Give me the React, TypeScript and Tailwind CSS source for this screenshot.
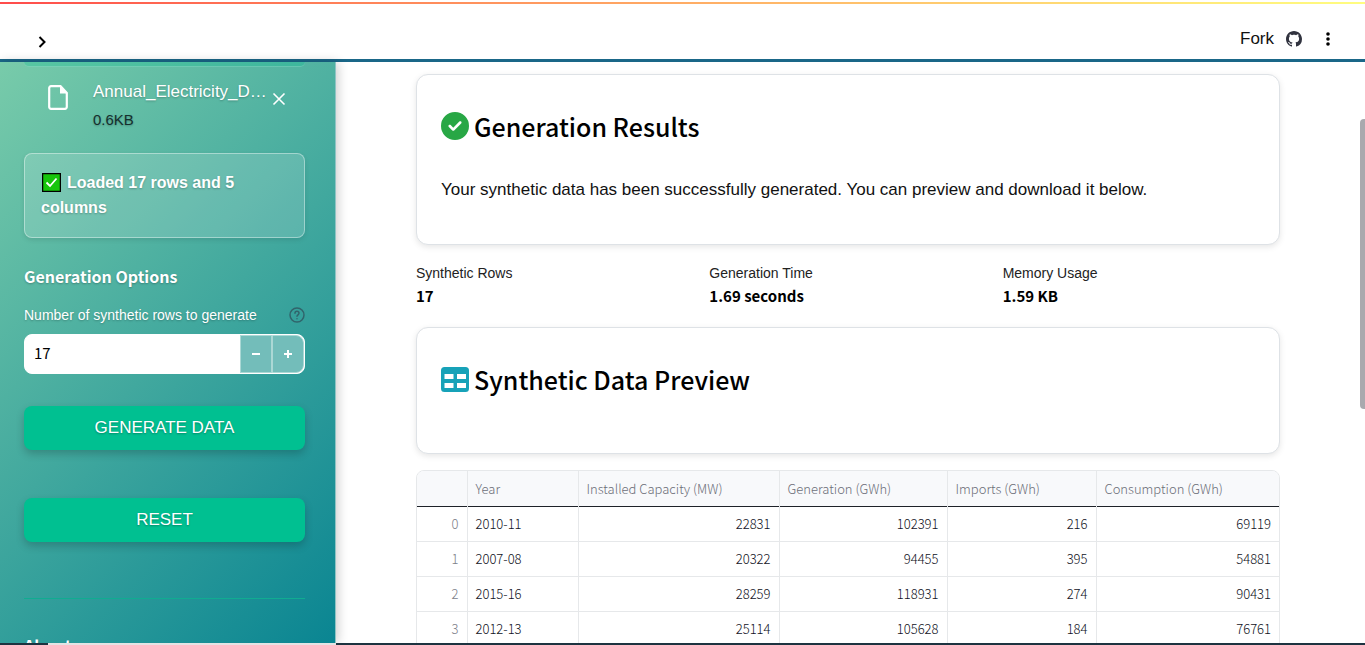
import React from "react";
import { FaCircleCheck } from "react-icons/fa6";

const rows = [
  ["2010-11", "22831", "102391", "216", "69119"],
  ["2007-08", "20322", "94455", "395", "54881"],
  ["2015-16", "28259", "118931", "274", "90431"],
  ["2012-13", "25114", "105628", "184", "76761"],
];

const columns = ["Year", "Installed Capacity (MW)", "Generation (GWh)", "Imports (GWh)", "Consumption (GWh)"];

const metrics = [
  ["Synthetic Rows", "17"],
  ["Generation Time", "1.69 seconds"],
  ["Memory Usage", "1.59 KB"],
];

function GithubMark() {
  return (
    <svg width="16" height="16" viewBox="0 0 16 16" fill="currentColor">
      <path d="M8 0C3.58 0 0 3.58 0 8c0 3.54 2.29 6.53 5.47 7.59.4.07.55-.17.55-.38 0-.19-.01-.82-.01-1.49-2.01.37-2.53-.49-2.69-.94-.09-.23-.48-.94-.82-1.13-.28-.15-.68-.52-.01-.53.63-.01 1.08.58 1.23.82.72 1.21 1.87.87 2.33.66.07-.52.28-.87.51-1.07-1.78-.2-3.64-.89-3.64-3.95 0-.87.31-1.59.82-2.15-.08-.2-.36-1.02.08-2.12 0 0 .67-.21 2.2.82.64-.18 1.32-.27 2-.27.68 0 1.36.09 2 .27 1.53-1.04 2.2-.82 2.2-.82.44 1.1.16 1.92.08 2.12.51.56.82 1.27.82 2.15 0 3.07-1.87 3.75-3.65 3.95.29.25.54.73.54 1.48 0 1.07-.01 1.93-.01 2.2 0 .21.15.46.55.38A8.013 8.013 0 0016 8c0-4.42-3.58-8-8-8z" />
    </svg>
  );
}

function Header() {
  return (
    <header className="shrink-0 border-b-[3px] border-[#1a6788] bg-white">
      <div className="mt-[2px] h-[2px] bg-gradient-to-r from-[#ff4b4b] to-[#fffd80]" />
      <div className="flex h-[55px] items-center justify-between pr-[29px] pl-8">
        <button aria-label="Open sidebar" className="mt-5 flex size-5 items-center justify-center text-black">
          <svg width="10" height="14" viewBox="0 0 10 14" fill="none" stroke="currentColor" strokeWidth="2">
            <path d="M2.500 2l5 5-5 5" />
          </svg>
        </button>
        <div className="mt-[14px] flex items-center">
          <a href="#fork" className="text-[17px] text-[#111]">Fork</a>
          <a href="#github" aria-label="GitHub" className="mt-px ml-3 text-[#31333f]">
            <GithubMark />
          </a>
          <button aria-label="Menu" className="ml-[18px] flex w-4 justify-center text-black">
            <svg width="4" height="14" viewBox="0 0 4 14" fill="currentColor">
              <circle cx="2" cy="2" r="1.800" />
              <circle cx="2" cy="7" r="1.800" />
              <circle cx="2" cy="12" r="1.800" />
            </svg>
          </button>
        </div>
      </div>
    </header>
  );
}

function ActionButton({ children }: { children: React.ReactNode }) {
  return (
    <button className="flex h-11 w-full items-center justify-center rounded-lg bg-[#00c091] text-[17px] text-white shadow-[0_4px_8px_rgba(0,0,0,0.2)] [text-shadow:0_1px_2px_rgba(0,0,0,0.3)]">
      {children}
    </button>
  );
}

function Sidebar() {
  return (
    <aside className="w-[336px] shrink-0 overflow-hidden border-r border-[#8fc4c4] bg-[linear-gradient(135deg,#78cbaa_0%,#0a8592_100%)] pr-[30px] pl-6 text-white shadow-[2px_0_10px_rgba(0,0,0,0.2)] [text-shadow:0_1px_2px_rgba(0,0,0,0.25)]">
      <div className="h-[5px] rounded-b-lg border-b border-white/20 bg-[#00c091]/25" />
      <div className="mt-[14px] flex h-[56px] pl-6">
        <svg className="mt-1 shrink-0" width="20" height="25" viewBox="0 0 20 25" fill="none">
          <path d="M3 1.2h9.5L18.8 8v14a1.8 1.8 0 0 1-1.8 1.8H3A1.8 1.8 0 0 1 1.2 22V3A1.8 1.8 0 0 1 3 1.2z" stroke="#fff" strokeWidth="2.2" />
          <path d="M12 1v7.500h7.500z" fill="#fff" />
        </svg>
        <div className="ml-[25px] w-[172px]">
          <div className="text-[17px] leading-[22px] whitespace-nowrap">Annual_Electricity_D…</div>
          <div className="mt-[7px] text-[15px] leading-5 text-[#15302e]">0.6KB</div>
        </div>
        <button aria-label="Remove file" className="ml-[7px] mt-[11px] flex size-[14px]">
          <svg width="14" height="14" viewBox="0 0 14 14" stroke="#fff" strokeWidth="1.600">
            <path d="M1.500 1.500l11 11M12.500 1.500l-11 11" />
          </svg>
        </button>
      </div>
      <div className="mt-4 rounded-lg border border-white/40 bg-white/15 px-4 pt-4 pb-[17px] text-base leading-[25px] font-bold shadow-[0_2px_5px_rgba(0,0,0,0.1)]">
        <svg className="mr-[6px] ml-px inline-block align-[-4px]" width="19" height="19" viewBox="0 0 19 19">
          <rect x="0.500" y="0.500" width="18" height="18" fill="#16c60c" stroke="#000" strokeWidth="1.500" />
          <path d="M4.500 9.500l3.500 3.500 6.500-7.500" fill="none" stroke="#fff" strokeWidth="1.800" />
        </svg>
        Loaded 17 rows and 5 columns
      </div>
      <h3 className="mt-[26px] font-['Noto_Sans_CJK_SC',sans-serif] text-base leading-6 font-bold">Generation Options</h3>
      <div className="mt-[18px] flex items-center justify-between">
        <label htmlFor="rows" className="text-sm leading-[18px]">Number of synthetic rows to generate</label>
        <svg width="16" height="16" viewBox="0 0 24 24" fill="none" stroke="#31646b" strokeWidth="2.200" strokeLinecap="round">
          <circle cx="12" cy="12" r="10.500" />
          <path d="M9 9.500a3 3 0 0 1 6 0c0 2-3 2.500-3 4.500M12 17.500v.1" />
        </svg>
      </div>
      <div className="mt-[10px] flex h-10 overflow-hidden rounded-lg border border-white bg-white">
        <input id="rows" defaultValue="17" className="min-w-0 flex-1 px-[9px] pb-[2px] font-['Noto_Sans_CJK_SC',sans-serif] text-[15px] text-black outline-none" />
        <button aria-label="Decrease" className="flex w-8 items-center justify-center border border-[#abd8d5] bg-[#73bdba]">
          <svg width="8" height="8" viewBox="0 0 8 8" stroke="#fff" strokeWidth="2"><path d="M0 4h8" /></svg>
        </button>
        <button aria-label="Increase" className="flex w-8 items-center justify-center rounded-r-lg border border-[#abd8d5] bg-[#73bdba]">
          <svg width="8" height="8" viewBox="0 0 8 8" stroke="#fff" strokeWidth="2"><path d="M0 4h8M4 0v8" /></svg>
        </button>
      </div>
      <div className="mt-8 flex flex-col gap-12">
        <ActionButton>GENERATE DATA</ActionButton>
        <ActionButton>RESET</ActionButton>
      </div>
      <div role="separator" className="mt-14 h-px bg-[#10ac91]" />
      <h3 className="mt-[34px] font-['Noto_Sans_CJK_SC',sans-serif] text-base leading-6 font-bold">About</h3>
    </aside>
  );
}

function TableIcon() {
  return (
    <svg width="28" height="25" viewBox="0 0 28 25">
      <path fillRule="evenodd" fill="#17a2b8" d="M3.500 0h21A3.500 3.500 0 0 1 28 3.500v18a3.500 3.500 0 0 1-3.500 3.500h-21A3.500 3.500 0 0 1 0 21.500v-18A3.500 3.500 0 0 1 3.500 0zM3.500 7v5h9V7zM16 7v5h9V7zM3.500 16v5h9v-5zM16 16v5h9v-5z" />
    </svg>
  );
}

function Card({ icon, title, children }: { icon: React.ReactNode; title: string; children?: React.ReactNode }) {
  return (
    <section className="rounded-xl border border-[#dee2e6] bg-white px-6 pt-[31px] shadow-[0_2px_6px_rgba(0,0,0,0.1)]">
      <h2 className="flex items-center gap-[5px] font-['Noto_Sans_CJK_SC',sans-serif] text-[25px] leading-10 font-medium text-black">
        {icon}
        {title}
      </h2>
      {children}
    </section>
  );
}

export default function App() {
  return (
    <div className="relative flex h-screen flex-col overflow-hidden bg-white font-['Liberation_Sans',sans-serif] text-black">
      <Header />
      <div className="flex min-h-0 flex-1">
        <Sidebar />
        <main className="min-w-0 flex-1 overflow-hidden pt-3 pr-[85px] pl-20">
          <Card icon={<FaCircleCheck size={28} color="#28a745" />} title="Generation Results">
            <p className="mt-[31px] pb-[42px] text-[17px] leading-[25px] text-[#111]">
              Your synthetic data has been successfully generated. You can preview and download it below.
            </p>
          </Card>
          <dl className="mt-[18px] grid grid-cols-3 gap-4">
            {metrics.map(([label, value]) => (
              <div key={label}>
                <dt className="text-sm leading-5 text-[#222]">{label}</dt>
                <dd className="mt-[2px] font-['Noto_Sans_CJK_SC',sans-serif] text-[15px] leading-[22px] font-bold">{value}</dd>
              </div>
            ))}
          </dl>
          <div className="mt-5">
            <Card icon={<TableIcon />} title="Synthetic Data Preview">
              <div className="h-[54px]" />
            </Card>
          </div>
          <div className="mt-4 overflow-hidden rounded-t-lg border border-[#e6e8ea]">
            <table className="w-full table-fixed border-collapse font-['Noto_Sans_CJK_SC',sans-serif] text-[13px] leading-5 font-light">
              <colgroup>
                <col className="w-[50px]" />
                <col className="w-[111px]" />
                <col className="w-[201px]" />
                <col className="w-[168px]" />
                <col className="w-[149px]" />
                <col />
              </colgroup>
              <thead>
                <tr className="h-[35px] border-b border-[#1e2229] bg-[#f8f9fb] text-left text-[#6c6e78]">
                  <th aria-label="Index" className="border-r border-[#e6e8ea]" />
                  {columns.map((c) => (
                    <th key={c} className="border-r border-[#e6e8ea] px-2 pt-[2px] font-light last:border-r-0">{c}</th>
                  ))}
                </tr>
              </thead>
              <tbody>
                {rows.map((row, i) => (
                  <tr key={row[0]} className="h-[35px] border-b border-[#e6e8ea] text-right text-[#10121c]">
                    <th className="border-r border-[#e6e8ea] px-2 text-right font-light text-[#7c7e88]">{i}</th>
                    {row.map((cell, j) => (
                      <td key={j} className="border-r border-[#e6e8ea] px-2 first-of-type:text-left last:border-r-0">{cell}</td>
                    ))}
                  </tr>
                ))}
              </tbody>
            </table>
          </div>
        </main>
      </div>
      <footer className="flex h-[2px] shrink-0 bg-[#1d3340]">
        <div className="ml-12 w-72 bg-[#e4e4e4]" />
      </footer>
      <div className="absolute top-[119px] right-0 h-[290px] w-[5px] rounded-l-sm bg-[#a9a9ae]" />
    </div>
  );
}
